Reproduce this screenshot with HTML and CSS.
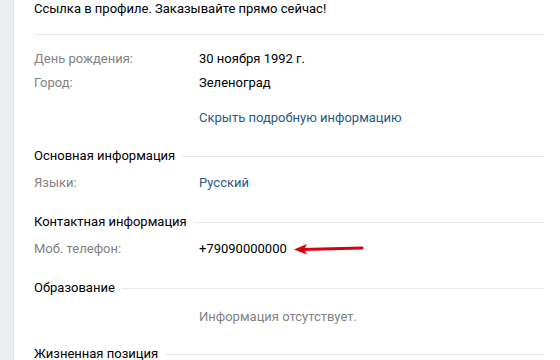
FILE: index.html
```html
<!DOCTYPE html>
<html lang="ru">

<head>
    <meta charset="UTF-8">
    <meta name="viewport" content="width=device-width, initial-scale=1.0">
    <title>Профиль</title>
    <link rel="stylesheet" href="styles.css">
</head>

<body>
    <div class="side"></div>

    <div class="profile">
        <div class="status">Ссылка в профиле. Заказывайте прямо сейчас!</div>

        <div class="short-info">
            <div class="row">
                <span class="label">День рождения:</span>
                <span class="value">30 ноября 1992 г.</span>
            </div>
            <div class="row">
                <span class="label">Город:</span>
                <span class="value">Зеленоград</span>
            </div>
            <div class="row toggle">
                <span class="label"></span>
                <a class="link" href="#">Скрыть подробную информацию</a>
            </div>
        </div>

        <div class="section first">
            <div class="section-title">Основная информация</div>
            <div class="row">
                <span class="label">Языки:</span>
                <a class="link" href="#">Русский</a>
            </div>
        </div>

        <div class="section">
            <div class="section-title">Контактная информация</div>
            <div class="row">
                <span class="label">Моб. телефон:</span>
                <span class="value">+79090000000</span>
                <svg class="arrow" width="70" height="12" viewBox="0 0 70 12">
                    <path d="M8 6.5 L68 5" stroke="#d8000c" stroke-width="3" stroke-linecap="round" fill="none" />
                    <path d="M0 6.5 L13 1 L10 6.5 L13 11.5 Z" fill="#d8000c" />
                </svg>
            </div>
        </div>

        <div class="section">
            <div class="section-title">Образование</div>
            <div class="row empty">
                <span class="label"></span>
                <span class="no-info">Информация отсутствует.</span>
            </div>
        </div>

        <div class="section last">
            <div class="section-title">Жизненная позиция</div>
        </div>
    </div>
</body>

</html>
```

FILE: styles.css
```css
body {
    margin: 0;
    display: flex;
    font-family: Roboto, "Open Sans", Arial, sans-serif;
    font-size: 13px;
    line-height: 18px;
    color: #000;
    background-color: #fff;
    height: 360px;
    overflow: hidden;
}

.side {
    width: 13px;
    flex-shrink: 0;
    background-color: #edeef0;
    border-right: 1px solid #e3e4e8;
}

.profile {
    width: 510px;
    padding-left: 20px;
}

.status {
    padding-bottom: 16px;
    border-bottom: 1px solid #e7e8ec;
}

.short-info {
    padding-top: 15px;
}

.row {
    display: flex;
    align-items: center;
    margin-bottom: 6px;
}

.label {
    width: 165px;
    flex-shrink: 0;
    color: #828282;
}

.value {
    color: #000;
}

.link {
    color: #2a5885;
    text-decoration: none;
}

.toggle {
    margin-top: 17px;
}

.section {
    padding-top: 15px;
}

.section.first {
    padding-top: 14px;
}

.section-title {
    display: flex;
    align-items: center;
    margin-bottom: 9px;
}

.section-title::after {
    content: "";
    flex: 1;
    margin-left: 7px;
    border-top: 1px solid #e7e8ec;
}

.arrow {
    margin-left: 7px;
}

.empty {
    margin-top: 11px;
}

.no-info {
    color: #828282;
}

.last {
    padding-top: 13px;
}
```
